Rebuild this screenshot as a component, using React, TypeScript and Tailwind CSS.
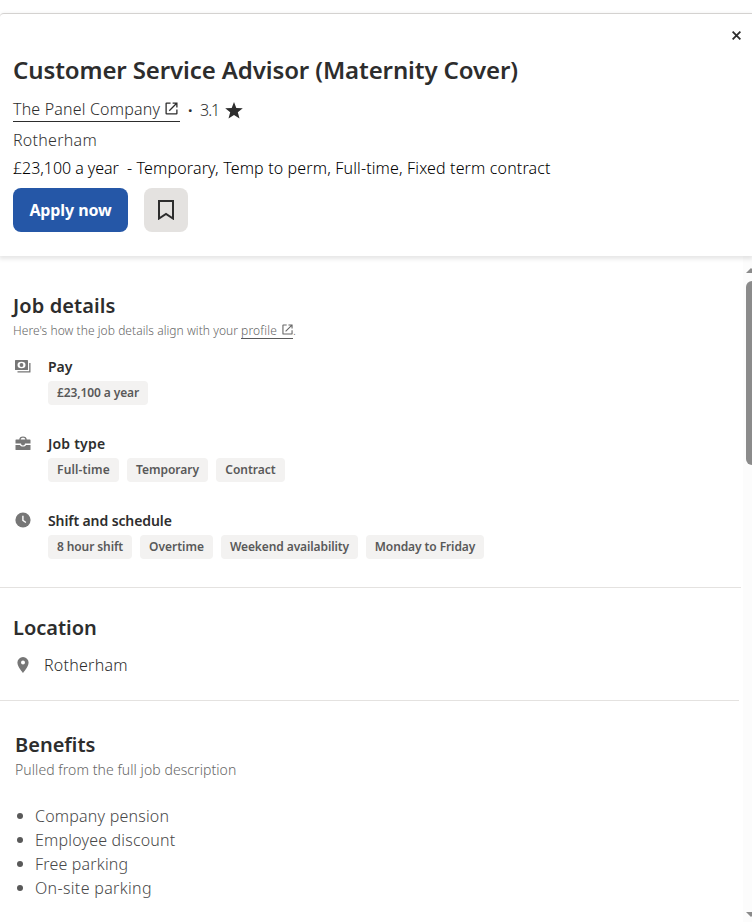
import { ReactNode } from "react";

type DetailProps = {
  icon: ReactNode;
  title: string;
  titleClass: string;
  tags: { label: string; className: string }[];
};

const benefits = [
  { label: "Company pension", className: "tracking-[0.2px]" },
  { label: "Employee discount", className: "tracking-[0.18px]" },
  { label: "Free parking", className: "tracking-[0.18px]" },
  { label: "On-site parking", className: "tracking-[0.33px]" },
];

const ExternalIcon = ({ className }: { className: string }) => (
  <svg viewBox="0 0 14 14" fill="none" stroke="currentColor" className={className}>
    <path d="M6 1.2H1.7a.5.5 0 0 0-.5.5v10.6a.5.5 0 0 0 .5.5h10.6a.5.5 0 0 0 .5-.5V8" strokeWidth="1.4" />
    <path d="M8.2 1.2h4.6v4.6M12.6 1.4 4.6 9.4" strokeWidth="1.4" />
  </svg>
);

const PayIcon = () => (
  <svg viewBox="0 0 16 13" className="h-[13px] w-4">
    <rect width="13" height="10" rx=".6" fill="#767676" />
    <ellipse cx="6.5" cy="5" rx="4" ry="3.2" fill="#fff" />
    <circle cx="6.5" cy="5" r="1.9" fill="#767676" />
    <path d="M14.2 3h1.3v9a.5.5 0 0 1-.5.5H2.500v-1.300h11.700z" fill="#767676" />
  </svg>
);

const JobTypeIcon = () => (
  <svg viewBox="0 0 16 15" fill="#767676" className="h-[15px] w-4">
    <path
      fillRule="evenodd"
      d="M4.3 3.5C4.3 1.6 5.7.5 8 .5s3.7 1.1 3.7 3h3.2a.6.6 0 0 1 .6.6V7.6H10a2 2 0 0 1-4 0H.5V4.1a.6.6 0 0 1 .6-.6zm1.4 0h4.6C10.3 2.4 9.4 1.8 8 1.8s-2.3.6-2.3 1.7z"
    />
    <path d="M.5 8.900H5c.5 1 1.600 1.600 3 1.600s2.500-.6 3-1.600h4.500v4.500a.6.6 0 0 1-.6.6H1.100a.6.6 0 0 1-.6-.6z" />
  </svg>
);

const ClockIcon = () => (
  <svg viewBox="0 0 16 16" className="size-4">
    <circle cx="8" cy="8" r="7.600" fill="#767676" />
    <path d="M7.900 3.800v4.500l3 2.200" fill="none" stroke="#fff" strokeWidth="1.400" />
  </svg>
);

const Detail = ({ icon, title, titleClass, tags }: DetailProps) => (
  <div className="flex h-[77px]">
    <div className="flex h-4 w-[34px] shrink-0 items-center pl-px">{icon}</div>
    <div>
      <h3 className={`h-[23px] text-sm leading-[18px] font-semibold text-[#2d2d2d] ${titleClass}`}>{title}</h3>
      <div className="flex gap-2">
        {tags.map((tag) => (
          <span
            key={tag.label}
            className={`flex h-6 items-center justify-center rounded bg-[#f3f2f1] text-xs font-semibold whitespace-nowrap text-[#595959] ${tag.className}`}
          >
            {tag.label}
          </span>
        ))}
      </div>
    </div>
  </div>
);

export default function App() {
  return (
    <div className="flex h-[922px] w-[752px] flex-col overflow-hidden bg-white pt-[13px] font-['Noto_Sans',sans-serif] font-[350] text-[#2d2d2d]">
      <header className="relative z-10 h-[243px] shrink-0 rounded-tl border-t border-[#d4d2d0] bg-white pl-[13px] shadow-[0_2px_4px_1px_rgba(0,0,0,0.1)]">
        <button aria-label="Close" className="absolute top-[17px] right-[11px]">
          <svg viewBox="0 0 9 9" className="size-[9px]" fill="none" stroke="#2d2d2d" strokeWidth="1.8">
            <path d="m.6.6 7.800 7.800M8.400.6.6 8.400" />
          </svg>
        </button>
        <h1 className="pt-10 text-2xl leading-8 font-semibold tracking-[-0.11px] whitespace-nowrap">
          Customer Service Advisor (Maternity Cover)
        </h1>
        <div className="mt-3 flex h-[25px] items-start">
          <a href="#" className="flex h-[24px] items-start border-b border-[#2d2d2d]">
            <span className="w-[152px] text-base leading-[23px] tracking-[0.17px] whitespace-nowrap">
              The Panel Company
            </span>
            <ExternalIcon className="mt-[4px] mr-[2px] size-[13px]" />
          </a>
          <span className="ml-2 w-3 text-base leading-[25px] font-bold">·</span>
          <span className="w-[25px] text-base leading-[25px] tracking-[-1px]">3.1</span>
          <svg viewBox="0 0 18 17" className="mt-[4px] h-[17px] w-[18px]" fill="#2d2d2d">
            <path d="m9 0 2.300 5.900 6.500.4-5 4 1.700 6.200L9 13l-5.500 3.500 1.700-6.200-5-4 6.500-.4z" />
          </svg>
        </div>
        <div className="mt-[5px] h-6 text-base leading-6 tracking-[0.27px] text-[#333]">Rotherham</div>
        <div className="mt-1 flex h-6 text-base leading-6 whitespace-nowrap text-black">
          <span className="w-[114px] tracking-[-0.05px]">£23,100 a year</span>
          <span className="tracking-[0.14px]">- Temporary, Temp to perm, Full-time, Fixed term contract</span>
        </div>
        <div className="mt-[8px] flex gap-4">
          <button className="h-11 w-[115px] rounded-lg bg-[#2557a7] text-base font-bold tracking-[-0.1px] whitespace-nowrap text-white">
            Apply now
          </button>
          <button aria-label="Save job" className="flex size-11 items-center justify-center rounded-lg bg-[#e4e2e0]">
            <svg viewBox="0 0 16 20" className="h-5 w-4" fill="none" stroke="#2d2d2d" strokeWidth="2">
              <path d="M1 1h14v17.500l-7-4.500-7 4.500z" />
            </svg>
          </button>
        </div>
      </header>

      <div className="flex min-h-0 flex-1">
        <main className="w-[743px] shrink-0">
          <section className="h-[331px] pt-9 pl-[13px]">
            <h2 className="h-7 text-xl leading-7 font-semibold tracking-[0.1px]">Job details</h2>
            <p className="mt-px flex h-5 text-xs leading-5 whitespace-nowrap text-[#666]">
              <span className="w-[228px] tracking-[0.05px]">Here's how the job details align with your</span>
              <a href="#" className="flex h-[18px] border-b border-[#595959]">
                <span className="w-[41px] leading-5 tracking-[0.2px]">profile</span>
                <ExternalIcon className="mt-[3px] size-[11px]" />
              </a>
              <span>.</span>
            </p>
            <div className="mt-[17px] pl-px">
              <Detail
                icon={<PayIcon />}
                title="Pay"
                titleClass=""
                tags={[{ label: "£23,100 a year", className: "w-[100px] tracking-[-0.1px]" }]}
              />
              <Detail
                icon={<JobTypeIcon />}
                title="Job type"
                titleClass="tracking-[0.2px]"
                tags={[
                  { label: "Full-time", className: "w-[71px] tracking-[0.15px]" },
                  { label: "Temporary", className: "w-[81px]" },
                  { label: "Contract", className: "w-[69px]" },
                ]}
              />
              <Detail
                icon={<ClockIcon />}
                title="Shift and schedule"
                titleClass="tracking-[-0.1px]"
                tags={[
                  { label: "8 hour shift", className: "w-[84px] tracking-[-0.1px]" },
                  { label: "Overtime", className: "w-[73px]" },
                  { label: "Weekend availability", className: "w-[137px] tracking-[-0.1px]" },
                  { label: "Monday to Friday", className: "w-[118px] tracking-[-0.1px]" },
                ]}
              />
            </div>
          </section>

          <section className="h-[113px] w-[741px] border-t border-[#e4e2e0] pt-[26px] pl-[13px]">
            <h2 className="h-7 text-xl leading-7 font-semibold">Location</h2>
            <div className="mt-[11px] flex h-6 items-center">
              <svg viewBox="0 0 12 16" className="mb-px ml-[3.5px] h-4 w-3" fill="#767676">
                <path
                  fillRule="evenodd"
                  d="M6 0a5.600 5.600 0 0 0-5.600 5.600C.4 9.800 6 16 6 16s5.600-6.200 5.600-10.400A5.600 5.600 0 0 0 6 0zm0 7.600a2 2 0 1 1 0-4 2 2 0 0 1 0 4z"
                />
              </svg>
              <span className="ml-[15.5px] text-base tracking-[0.25px]">Rotherham</span>
            </div>
          </section>

          <section className="w-[739px] border-t border-[#e4e2e0] pt-[30px] pl-[15px]">
            <h2 className="h-7 text-xl leading-7 font-semibold">Benefits</h2>
            <p className="h-[22px] text-sm leading-[22px] tracking-[0.07px] text-[#666]">
              Pulled from the full job description
            </p>
            <ul className="mt-[23px] text-base leading-6 text-[#484848]">
              {benefits.map((benefit) => (
                <li key={benefit.label} className={`flex items-center ${benefit.className}`}>
                  <span className="mr-3 ml-[2px] size-1.5 rounded-full bg-[#595959]" />
                  {benefit.label}
                </li>
              ))}
            </ul>
          </section>
        </main>

        <div className="flex w-[9px] shrink-0 flex-col items-end overflow-hidden bg-[#fcfcfc] pt-3">
          <svg viewBox="0 0 6 5" className="h-[5px] w-1.5" fill="#8b8b8b">
            <path d="M0 5 5 0l1 1v4z" />
          </svg>
          <div className="mt-2 h-[184px] w-1.5 rounded-l-md bg-[#8b8b8b]" />
          <svg viewBox="0 0 6 5" className="mt-auto mb-[5px] h-[5px] w-1.5" fill="#8b8b8b">
            <path d="M0 0 5 5l1-1V0z" />
          </svg>
        </div>
      </div>
    </div>
  );
}
